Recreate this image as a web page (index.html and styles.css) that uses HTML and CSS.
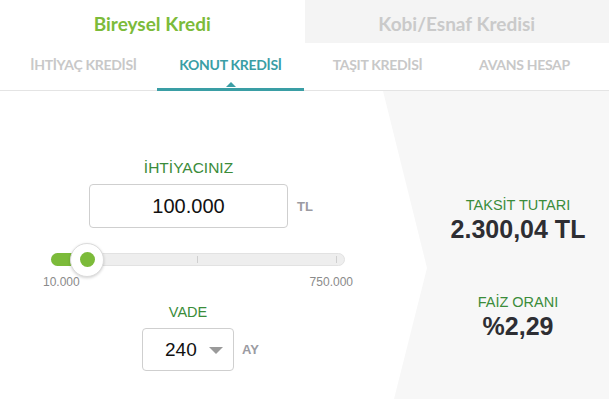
FILE: index.html
```html
<!DOCTYPE html>
<html lang="tr">
<head>
<meta charset="utf-8">
<title>Kredi Hesaplama</title>
<link rel="stylesheet" href="styles.css">
</head>
<body>
<div class="widget">
  <div class="top-tabs">
    <div class="top-tab active">Bireysel Kredi</div>
    <div class="top-tab">Kobi/Esnaf Kredisi</div>
  </div>
  <div class="sub-tabs">
    <div class="sub-tab">İHTİYAÇ KREDİSİ</div>
    <div class="sub-tab active">KONUT KREDİSİ</div>
    <div class="sub-tab">TAŞIT KREDİSİ</div>
    <div class="sub-tab">AVANS HESAP</div>
  </div>
  <div class="main">
    <div class="form">
      <div class="label amount-label">İHTİYACINIZ</div>
      <div class="field-row amount-row">
        <div class="input-box">100.000</div>
        <span class="unit">TL</span>
      </div>
      <div class="slider">
        <div class="slider-fill"></div>
        <div class="tick tick-mid"></div>
        <div class="tick tick-end"></div>
        <div class="thumb"><div class="thumb-dot"></div></div>
      </div>
      <div class="range-labels">
        <span>10.000</span>
        <span>750.000</span>
      </div>
      <div class="label term-label">VADE</div>
      <div class="field-row term-row">
        <div class="select-box">
          <span class="select-value">240</span>
          <span class="caret"></span>
        </div>
        <span class="unit">AY</span>
      </div>
    </div>
    <div class="result-panel">
      <div class="result">
        <div class="result-label">TAKSİT TUTARI</div>
        <div class="result-value">2.300,04 TL</div>
      </div>
      <div class="result">
        <div class="result-label">FAİZ ORANI</div>
        <div class="result-value">%2,29</div>
      </div>
    </div>
  </div>
</div>
</body>
</html>
```
FILE: styles.css
```css
* { box-sizing: border-box; }
html, body { margin: 0; padding: 0; background: #fff; }
body { font-family: "Liberation Sans", Arial, sans-serif; overflow: hidden; }

.widget { width: 609px; }

.top-tabs { display: flex; height: 43px; }
.top-tab {
  flex: 1;
  display: flex;
  align-items: center;
  justify-content: center;
  padding-top: 4px;
  font-family: Lato, "Open Sans", sans-serif;
  font-weight: 700;
  font-size: 19px;
  color: #cacaca;
  background: #f4f4f4;
}
.top-tab.active { background: #fff; color: #7cbb3a; }

.sub-tabs {
  display: flex;
  padding: 0 11px 0 10px;
  border-bottom: 1px solid #e4e4e4;
}
.sub-tab {
  position: relative;
  flex: 1;
  height: 47px;
  display: flex;
  align-items: center;
  justify-content: center;
  padding-bottom: 4px;
  font-family: Lato, "Open Sans", sans-serif;
  font-weight: 700;
  font-size: 14px;
  letter-spacing: -0.3px;
  color: #c8c8c8;
}
.sub-tab.active { color: #3a9ea5; }
.sub-tab.active::after {
  content: "";
  position: absolute;
  left: 0; right: 0; bottom: -1px;
  height: 3px;
  background: #3a9ea5;
}
.sub-tab.active::before {
  content: "";
  position: absolute;
  left: 50%;
  bottom: 3px;
  margin-left: -5px;
  border-left: 5px solid transparent;
  border-right: 5px solid transparent;
  border-bottom: 5px solid #3a9ea5;
}

.main { display: flex; height: 308px; }

.form { width: 383px; padding-top: 68px; }
.label {
  color: #3b8c3a;
  text-align: center;
  line-height: 17px;
}
.amount-label { width: 199px; margin-left: 89px; font-size: 15.5px; }
.term-label { width: 92px; margin-left: 142px; margin-top: 15px; font-size: 14.5px; }

.field-row { display: flex; align-items: center; }
.amount-row { margin-left: 89px; margin-top: 8px; gap: 9px; }
.term-row { margin-left: 142px; margin-top: 7px; gap: 8px; }

.input-box {
  width: 199px;
  height: 44px;
  border: 1px solid #cfcfcf;
  border-radius: 4px;
  display: flex;
  align-items: center;
  justify-content: center;
  font-size: 20px;
  color: #111;
}
.unit { font-size: 13px; font-weight: 700; color: #9b9ba2; }

.slider {
  position: relative;
  margin-left: 51px;
  margin-top: 25px;
  width: 294px;
  height: 13px;
  background: #eeeeee;
  border: 1px solid #e2e2e2;
  border-radius: 7px;
}
.slider-fill {
  position: absolute;
  left: -1px; top: -1px; bottom: -1px;
  width: 36px;
  background: #7cbb3a;
  border-radius: 7px 0 0 7px;
}
.tick {
  position: absolute;
  top: 2px;
  bottom: 2px;
  width: 1px;
  background: #cfcfcf;
}
.tick-mid { left: 145px; }
.tick-end { left: 284px; }
.thumb {
  position: absolute;
  left: 18px;
  top: 50%;
  width: 34px;
  height: 34px;
  margin-top: -17px;
  border-radius: 50%;
  background: #fff;
  border: 1px solid #dcdcdc;
  box-shadow: 0 1px 3px rgba(0,0,0,0.18);
  display: flex;
  align-items: center;
  justify-content: center;
}
.thumb-dot { width: 15px; height: 15px; border-radius: 50%; background: #7cbb3a; }

.range-labels {
  display: flex;
  justify-content: space-between;
  margin-left: 43px;
  margin-top: 9px;
  width: 310px;
  font-size: 12px;
  line-height: 14px;
  color: #8a8a8a;
}

.select-box {
  width: 92px;
  height: 43px;
  border: 1px solid #cfcfcf;
  border-radius: 4px;
  display: flex;
  align-items: center;
  padding-left: 22px;
  gap: 12px;
}
.select-value { font-size: 19px; color: #111; }
.caret {
  width: 0; height: 0;
  border-left: 7px solid transparent;
  border-right: 7px solid transparent;
  border-top: 7px solid #9a9a9a;
  margin-top: 1px;
}

.result-panel {
  flex: 1;
  background: #f7f7f7;
  clip-path: polygon(0 0, 100% 0, 100% 100%, 11px 100%, 44px 177px);
  padding: 46px 0 0 44px;
  display: flex;
  flex-direction: column;
  justify-content: center;
  align-items: center;
  gap: 52px;
}
.result { text-align: center; }
.result-label { font-size: 14.5px; line-height: 17px; color: #3b8c3a; }
.result-value {
  margin-top: 3px;
  font-size: 25px;
  line-height: 25px;
  font-weight: 700;
  color: #2e2e33;
}
```
